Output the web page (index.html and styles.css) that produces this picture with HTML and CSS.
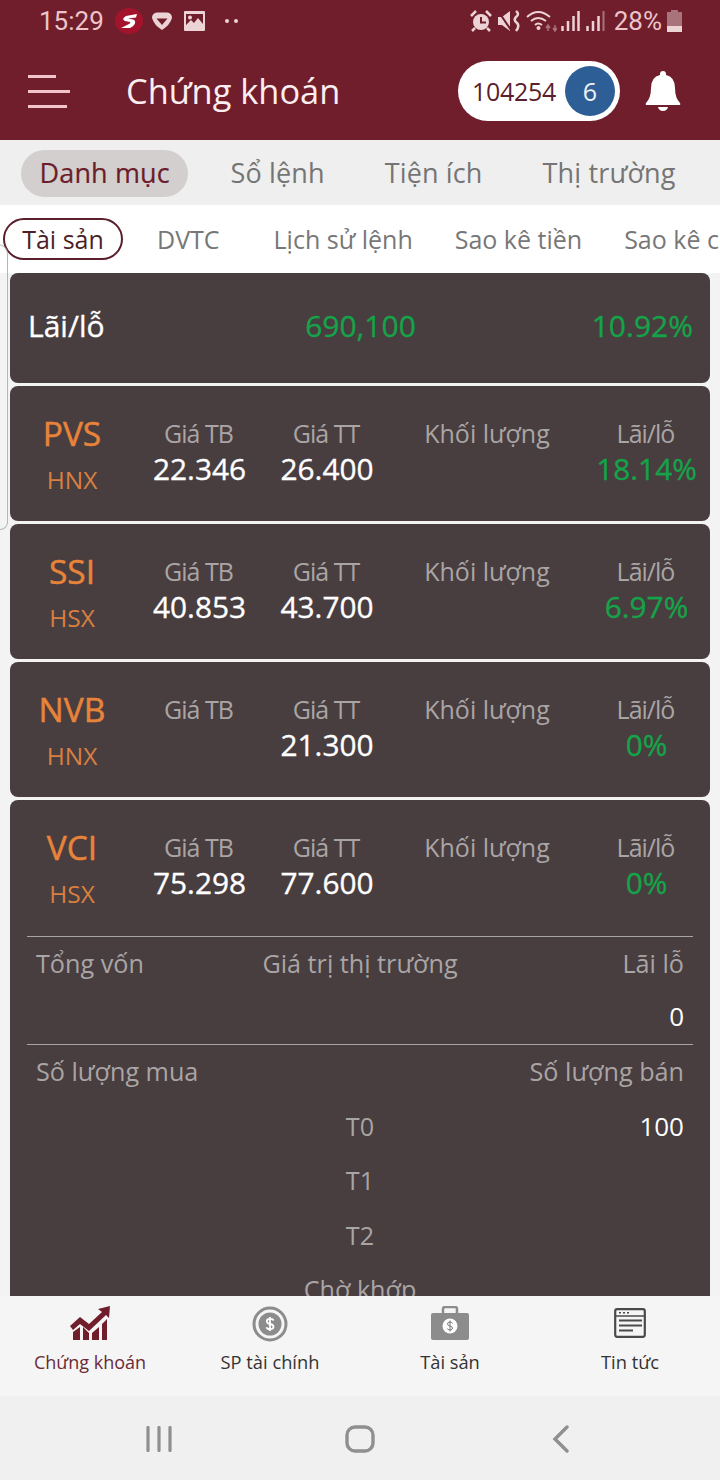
FILE: index.html
```html
<!DOCTYPE html>
<html>
<head>
    <title>Chứng khoán</title>
    <link rel="stylesheet" href="styles.css">
</head>
<body>
<div class="phone">

    <div class="top">
        <div class="status">
            <span class="clock">15:29</span>
            <svg class="ic-s" width="28" height="26" viewBox="0 0 28 26"><ellipse cx="14" cy="13" rx="14" ry="13" fill="#a3142c"/><path d="M22 6 L11 8 Q6 11 10 13 L15 14 Q16 15 14 16 L6 20 L15 20 Q21 17 20 13 Q19 11 15 11 L13 10.500 L21 9.500 Z" fill="#fff"/></svg>
            <svg class="ic-shield" width="20" height="18" viewBox="0 0 20 18"><path d="M5 0.500 H15 Q20 1 20 6 Q18 13 10 18 Q2 13 0 6 Q0 1 5 0.500 Z" fill="#ecd3d6"/><path d="M4.500 6.500 H15.500 L10 13 Z" fill="#701e2c"/></svg>
            <svg class="ic-pic" width="21" height="20" viewBox="0 0 21 20"><path d="M1 0 H20 Q21 0 21 1 V19 Q21 20 20 20 H1 Q0 20 0 19 V1 Q0 0 1 0 Z M2 3 V14 L7 9 L10 12 L14 7 L19 13 V3 Z" fill="#ecd3d6" fill-rule="evenodd"/><circle cx="6" cy="6.500" r="2" fill="#ecd3d6"/></svg>
            <span class="dots"><i></i><i></i></span>
            <span class="status-gap"></span>
            <svg class="ic-alarm" width="22" height="22" viewBox="0 0 22 22"><circle cx="11" cy="12" r="8" fill="#ecd3d6"/><path d="M11 7 V12.500 H16" stroke="#701e2c" stroke-width="2" fill="none"/><path d="M1 6 L6 1 M21 6 L16 1 M5 18 L2 21 M17 18 L20 21" stroke="#ecd3d6" stroke-width="2.500"/></svg>
            <svg class="ic-mute" width="23" height="22" viewBox="0 0 23 22"><path d="M0 7 H4 L12 1 V21 L4 15 H0 Z" fill="#ecd3d6"/><path d="M0 1 L13 20" stroke="#701e2c" stroke-width="2"/><path d="M18 1 Q22 4 18 7 Q15 10 19 13 Q22 16 18 21" stroke="#ecd3d6" stroke-width="2.500" fill="none"/></svg>
            <svg class="ic-wifi" width="31" height="22" viewBox="0 0 31 22"><path d="M1 7 Q12 -3 24 7 M5 11 Q12 5 20 11 M9 15 Q12 12 16 15" stroke="#ecd3d6" stroke-width="2" fill="none"/><circle cx="12.500" cy="18" r="2" fill="#ecd3d6"/><path d="M22 15 V21 M29 21 V15 M20 18 L22 15 L24 18 M27 18 L29 21 L31 18" stroke="#a9737c" stroke-width="1.500" fill="none"/></svg>
            <svg class="ic-bars" width="19" height="22" viewBox="0 0 19 22"><path d="M1.500 21 V16 M7 21 V11 M12.500 21 V6 M17.500 21 V1" stroke="#ecd3d6" stroke-width="2.500"/></svg>
            <svg class="ic-bars2" width="19" height="22" viewBox="0 0 19 22"><path d="M1.500 21 V16 M7 21 V11 M12.500 21 V6" stroke="#ecd3d6" stroke-width="2.500"/><path d="M17.500 21 V1" stroke="#a9737c" stroke-width="2"/></svg>
            <span class="batt-txt">28%</span>
            <svg width="15" height="22" viewBox="0 0 15 22"><path d="M4 0 H11 V2 H15 V22 H0 V2 H4 Z" fill="#a9737c"/><path d="M0 16 H15 V22 H0 Z" fill="#ecd3d6"/></svg>
        </div>
        <div class="appbar">
            <div class="burger"><i class="b1"></i><i class="b2"></i><i class="b3"></i></div>
            <div class="title">Chứng khoán</div>
            <div class="account"><span class="acc-no">104254</span><span class="acc-badge">6</span></div>
            <svg class="bell" width="36" height="42" viewBox="0 0 36 42"><path d="M18 1 Q21 1 21 4 V5 Q30 7 30 18 Q30 28 35 33 Q36 35 34 35 H2 Q0 35 1 33 Q6 28 6 18 Q6 7 15 5 V4 Q15 1 18 1 Z" fill="#fff"/><path d="M13 37 H23 Q22 41 18 41 Q14 41 13 37 Z" fill="#fff"/></svg>
        </div>
    </div>

    <div class="tabs">
        <span class="tab tab-on">Danh mục</span>
        <span class="tab">Sổ lệnh</span>
        <span class="tab">Tiện ích</span>
        <span class="tab">Thị trường</span>
    </div>

    <div class="subtabs">
        <span class="sub sub-on">Tài sản</span>
        <span class="sub s2">DVTC</span>
        <span class="sub s3">Lịch sử lệnh</span>
        <span class="sub s4">Sao kê tiền</span>
        <span class="sub s5">Sao kê chứng khoán</span>
    </div>

    <div class="list">
        <div class="card total">
            <span class="total-lbl">Lãi/lỗ</span>
            <span class="total-val">690,100</span>
            <span class="total-pct">10.92%</span>
        </div>

        <div class="card">
            <div class="stock">
                <div class="sym"><b>PVS</b><span>HNX</span></div>
                <div class="col"><label class="tight">Giá TB</label><span>22.346</span></div>
                <div class="col"><label class="tight">Giá TT</label><span>26.400</span></div>
                <div class="col"><label>Khối lượng</label></div>
                <div class="col"><label class="tight">Lãi/lỗ</label><span class="up">18.14%</span></div>
            </div>
        </div>

        <div class="card">
            <div class="stock">
                <div class="sym"><b>SSI</b><span>HSX</span></div>
                <div class="col"><label class="tight">Giá TB</label><span>40.853</span></div>
                <div class="col"><label class="tight">Giá TT</label><span>43.700</span></div>
                <div class="col"><label>Khối lượng</label></div>
                <div class="col"><label class="tight">Lãi/lỗ</label><span class="up">6.97%</span></div>
            </div>
        </div>

        <div class="card">
            <div class="stock">
                <div class="sym"><b>NVB</b><span>HNX</span></div>
                <div class="col"><label class="tight">Giá TB</label></div>
                <div class="col"><label class="tight">Giá TT</label><span>21.300</span></div>
                <div class="col"><label>Khối lượng</label></div>
                <div class="col"><label class="tight">Lãi/lỗ</label><span class="up">0%</span></div>
            </div>
        </div>

        <div class="card open">
            <div class="stock">
                <div class="sym"><b>VCI</b><span>HSX</span></div>
                <div class="col"><label class="tight">Giá TB</label><span>75.298</span></div>
                <div class="col"><label class="tight">Giá TT</label><span>77.600</span></div>
                <div class="col"><label>Khối lượng</label></div>
                <div class="col"><label class="tight">Lãi/lỗ</label><span class="up">0%</span></div>
            </div>
            <div class="detail d1">
                <div class="row"><span class="muted">Tổng vốn</span><span class="muted">Giá trị thị trường</span><span class="muted">Lãi lỗ</span></div>
                <div class="row"><span></span><span></span><span class="val">0</span></div>
            </div>
            <div class="detail">
                <div class="row"><span class="muted">Số lượng mua</span><span></span><span class="muted">Số lượng bán</span></div>
                <div class="row"><span></span><span class="muted">T0</span><span class="val">100</span></div>
                <div class="row"><span></span><span class="muted">T1</span><span></span></div>
                <div class="row"><span></span><span class="muted">T2</span><span></span></div>
                <div class="row"><span></span><span class="muted">Chờ khớp</span><span></span></div>
            </div>
        </div>
    </div>

    <div class="edge"></div>

    <div class="bottom">
        <div class="nav nav-on">
            <svg width="40" height="36" viewBox="0 0 40 36"><path d="M0 20 L10 11 L19 18 L32 6 L28 3 L40 0 L39 12 L36 9 L19 25 L10 18 L3 24 Z" fill="#701e2c"/><path d="M3 34 V26 L10 21 V34 Z M13 34 V21 L19 27 V34 Z M22 34 V27 L29 21 V34 Z M32 34 V18 L37 13 V34 Z" fill="#701e2c"/></svg>
            <span>Chứng khoán</span>
        </div>
        <div class="nav">
            <svg width="36" height="36" viewBox="0 0 36 36"><circle cx="18" cy="18" r="16" fill="none" stroke="#8c8c8c" stroke-width="3"/><circle cx="18" cy="18" r="11.500" fill="#8c8c8c"/><path d="M21.500 14.500 Q21 12.800 18 12.800 Q14.800 12.800 14.800 15.200 Q14.800 17.300 18 18 Q21.500 18.700 21.500 20.800 Q21.500 23.200 18 23.200 Q15 23.200 14.500 21.300 M18 11 V25" stroke="#fff" stroke-width="1.800" fill="none"/></svg>
            <span>SP tài chính</span>
        </div>
        <div class="nav">
            <svg width="38" height="36" viewBox="0 0 38 36"><path d="M12 8 V3 Q12 1 14 1 H24 Q26 1 26 3 V8" fill="none" stroke="#8c8c8c" stroke-width="2.500"/><rect x="0" y="7" width="38" height="27" rx="2" fill="#8c8c8c"/><circle cx="19" cy="20" r="7.500" fill="#fff"/><path d="M21.500 17.500 Q21 16 19 16 Q16.500 16 16.500 18 Q16.500 19.500 19 20 Q21.500 20.500 21.500 22 Q21.500 24 19 24 Q16.800 24 16.300 22.500 M19 14.500 V25.500" stroke="#777" stroke-width="1" fill="none"/></svg>
            <span>Tài sản</span>
        </div>
        <div class="nav">
            <svg width="32" height="32" viewBox="0 0 32 32"><rect x="1.200" y="1.200" width="29.600" height="27.600" rx="2" fill="none" stroke="#4a4a4a" stroke-width="2.200"/><path d="M1 8 H31" stroke="#4a4a4a" stroke-width="1.500"/><path d="M5 12.500 H28 M5 17.500 H28 M5 22.500 H19" stroke="#4a4a4a" stroke-width="2.200"/><path d="M5 4.800 H7 M9 4.800 H11 M13 4.800 H15" stroke="#4a4a4a" stroke-width="1.500"/></svg>
            <span>Tin tức</span>
        </div>
    </div>

    <div class="sysbar">
        <svg width="28" height="26" viewBox="0 0 28 26"><path d="M3 1.500 V24.500 M14 1.500 V24.500 M25 1.500 V24.500" stroke="#8f8f8f" stroke-width="3.200" stroke-linecap="round"/></svg>
        <svg width="30" height="28" viewBox="0 0 30 28"><rect x="2" y="2" width="26" height="24" rx="8" fill="none" stroke="#8f8f8f" stroke-width="3.400"/></svg>
        <svg width="18" height="28" viewBox="0 0 18 28"><path d="M15 2 L3 14 L15 26" fill="none" stroke="#8f8f8f" stroke-width="3.400" stroke-linecap="round"/></svg>
    </div>

</div>
</body>
</html>
```

FILE: styles.css
```css
* {
    box-sizing: border-box;
}

html, body {
    margin: 0;
    padding: 0;
}

body {
    font-family: "Open Sans", "Noto Sans", sans-serif;
    background: #fff;
}

.phone {
    position: relative;
    width: 720px;
    height: 1480px;
    overflow: hidden;
    display: flex;
    flex-direction: column;
}

/* header */
.top {
    height: 140px;
    background: #701e2c;
    flex: none;
}

.status {
    height: 42px;
    padding: 0 38px 0 39px;
    display: flex;
    align-items: center;
    color: #ecc4ca;
}

.status svg {
    flex: none;
}

.clock {
    font-family: "Roboto", sans-serif;
    font-size: 26px;
    margin-right: 11px;
}

.ic-s {
    margin-right: 9px;
}

.ic-shield {
    margin-right: 12px;
}

.ic-pic {
    margin-right: 20px;
}

.dots {
    display: flex;
    gap: 5px;
}

.dots i {
    width: 4px;
    height: 4px;
    border-radius: 50%;
    background: #ecd3d6;
}

.status-gap {
    flex: 1;
}

.ic-alarm {
    margin-right: 6px;
}

.ic-mute {
    margin-right: 5px;
}

.ic-wifi {
    margin-right: 4px;
}

.ic-bars {
    margin-right: 6px;
}

.ic-bars2 {
    margin-right: 9px;
}

.batt-txt {
    font-family: "Roboto", sans-serif;
    font-size: 26px;
    margin-right: 5px;
}

.appbar {
    height: 98px;
    display: flex;
    align-items: center;
    padding-left: 28px;
}

.burger {
    width: 42px;
    height: 33px;
    display: flex;
    flex-direction: column;
    justify-content: space-between;
    margin-right: 56px;
}

.burger i {
    display: block;
    height: 3px;
    background: #f0c4ca;
}

.b1 {
    width: 28px;
}

.b2 {
    width: 42px;
}

.b3 {
    width: 39px;
}

.title {
    font-size: 34.400px;
    color: #fbeef0;
    width: 332px;
    padding-bottom: 2px;
}

.account {
    width: 162px;
    height: 60px;
    border-radius: 30px;
    background: #fff;
    display: flex;
    align-items: center;
    justify-content: space-between;
    padding: 0 5px 0 14px;
}

.acc-no {
    font-size: 25px;
    color: #5a1f2b;
    letter-spacing: -0.3px;
}

.acc-badge {
    width: 50px;
    height: 50px;
    border-radius: 50%;
    background: #2e5e96;
    color: #eef3f8;
    font-size: 25px;
    display: flex;
    align-items: center;
    justify-content: center;
}

.bell {
    margin-left: 25px;
}

/* tabs */
.tabs {
    height: 65px;
    flex: none;
    background: #efefef;
    display: flex;
    align-items: center;
    padding: 2px 0 0 21px;
}

.tab {
    font-size: 27px;
    letter-spacing: 0.15px;
    color: #757575;
    line-height: 45px;
    padding: 0 18px 2px;
    margin-right: 24px;
    white-space: nowrap;
}

.tab-on {
    background: #d3cfcf;
    color: #6b1d2b;
    border-radius: 24px;
    padding: 0 18.500px 2px;
    margin-right: 24px;
    -webkit-text-stroke: 0.2px #6b1d2b;
}

.subtabs {
    height: 67px;
    flex: none;
    background: #fff;
    display: flex;
    align-items: center;
    padding-left: 3px;
    white-space: nowrap;
    overflow: hidden;
}

.sub {
    font-size: 25px;
    color: #777;
    flex: none;
}

.sub-on {
    width: 120px;
    height: 42px;
    border: 2px solid #5a1f2b;
    border-radius: 21px;
    color: #4c1f28;
    display: flex;
    align-items: center;
    justify-content: center;
}

.s2 {
    margin-left: 34px;
}

.s3 {
    margin-left: 54px;
}

.s4 {
    margin-left: 42px;
}

.s5 {
    margin-left: 42px;
}

/* list */
.list {
    flex: 1;
    min-height: 0;
    overflow: hidden;
    background: #f3f3f3;
    border-top: 1px solid #fff;
    padding: 0 10px;
    display: flex;
    flex-direction: column;
    gap: 3px;
}

.card {
    background: #483d3f;
    border-radius: 8px;
    flex: none;
}

.total {
    height: 110px;
    display: grid;
    grid-template-columns: 1fr 1fr 1fr;
    align-items: center;
    padding: 0 17px 6px 18px;
    font-size: 30px;
    -webkit-text-stroke: 0.35px;
}

.total-lbl {
    color: #fff;
}

.total-val {
    color: #15a349;
    text-align: center;
}

.total-pct {
    color: #15a349;
    text-align: right;
}

.stock {
    height: 135px;
    display: grid;
    grid-template-columns: 126px 127px 128px 192px 127px;
}

.open .stock {
    height: 136px;
}

.sym {
    display: flex;
    flex-direction: column;
    align-items: center;
    padding: 25px 2px 0 0;
    color: #e8833a;
}

.sym b {
    font-weight: 400;
    font-size: 33.500px;
    line-height: 44px;
    -webkit-text-stroke: 0.5px;
}

.sym span {
    font-size: 24.500px;
    line-height: 34px;
    margin-top: 8px;
    color: #d97f3f;
}

.col {
    display: flex;
    flex-direction: column;
    align-items: center;
    padding-top: 29px;
    white-space: nowrap;
}

.col label {
    font-size: 25px;
    line-height: 36px;
    color: #aaa5a5;
}

.col .tight {
    letter-spacing: -1px;
    margin-left: -2px;
}

.col span {
    font-size: 29.800px;
    line-height: 36px;
    color: #fff;
    -webkit-text-stroke: 0.35px;
}

.col .up {
    color: #15a349;
}

.detail {
    margin: 0 17px;
    border-top: 1px solid #a8a3a4;
}

.row {
    height: 54.500px;
    display: grid;
    grid-template-columns: 1fr auto 1fr;
    align-items: center;
    padding: 0 9px 2px;
    font-size: 25.200px;
}

.d1 .row {
    height: 53.500px;
}

.row span:nth-child(2) {
    text-align: center;
}

.row span:nth-child(3) {
    text-align: right;
}

.muted {
    color: #aaa5a5;
}

.val {
    color: #fff;
    font-size: 26px;
}

/* thin line left over from the drawer */
.edge {
    position: absolute;
    left: -10px;
    top: 244px;
    width: 18px;
    height: 286px;
    border: 1px solid #b5b5b5;
    border-radius: 0 10px 8px 0;
    border-left: 0;
}

/* bottom nav */
.bottom {
    height: 100px;
    flex: none;
    background: #f5f5f5;
    display: grid;
    grid-template-columns: repeat(4, 180px);
}

.nav {
    display: flex;
    flex-direction: column;
    align-items: center;
    padding-top: 10px;
    font-size: 18.300px;
    color: #333;
}

.nav svg {
    height: 36px;
    flex: none;
}

.nav span {
    margin-top: 8px;
    line-height: 24px;
}

.nav-on {
    color: #6b2a36;
    font-size: 18px;
}

.sysbar {
    height: 84px;
    flex: none;
    background: #f0f0f0;
    padding-top: 2px;
    display: grid;
    grid-template-columns: 318px 84px 318px;
    align-items: center;
    justify-items: center;
}
```
